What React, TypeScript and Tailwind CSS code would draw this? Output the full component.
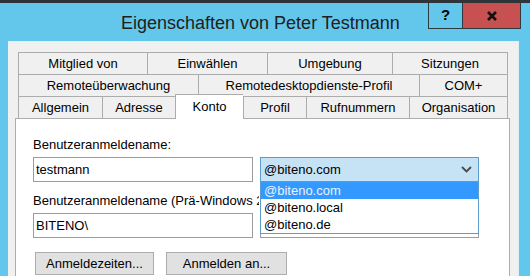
const ROW_1 = [
  { label: "Mitglied von", w: "w-[129px]" },
  { label: "Einwählen", w: "w-[120px]" },
  { label: "Umgebung", w: "w-[125px]" },
  { label: "Sitzungen", w: "w-[116px]" },
];
const ROW_2 = [
  { label: "Remoteüberwachung", w: "w-[180px]" },
  { label: "Remotedesktopdienste-Profil", w: "w-[221px]" },
  { label: "COM+", w: "w-[89px]" },
];
const ROW_3 = [
  { label: "Allgemein", w: "w-[84px]" },
  { label: "Adresse", w: "w-[73px]" },
  { label: "Konto", w: "w-[68px]", active: true },
  { label: "Profil", w: "w-[63px]" },
  { label: "Rufnummern", w: "w-[103px]" },
  { label: "Organisation", w: "w-[99px]" },
];
const DOMAINS = ["@biteno.com", "@biteno.local", "@biteno.de"];

type TabItem = { label: string; w: string; active?: boolean };

const TabRow = ({ tabs }: { tabs: TabItem[] }) => (
  <div className="flex h-[22px] ml-[10px]">
    {tabs.map((tab, i) => (
      <div
        key={tab.label}
        className={`${tab.w} flex items-center justify-center border-t border-l border-[#ACACAC] leading-[16px] ${
          i === tabs.length - 1 ? "border-r" : ""
        } ${
          tab.active
            ? "relative z-10 -mt-[2px] h-[25px] bg-white"
            : "h-[22px] bg-[#F0F0F0]"
        }`}
      >
        {tab.label}
      </div>
    ))}
  </div>
);

export default function App() {
  return (
    <div className="w-[530px] h-[276px] overflow-hidden bg-[#62C7EA] font-['Liberation_Sans',Arial,sans-serif] text-[13px] text-black">
      <div className="h-[3px] bg-[#2E3438]" />

      {/* title bar */}
      <div className="h-[38px] flex items-start">
        <div className="pl-[121px] mt-[10px] text-[18px] leading-[20px] text-[#1E1E1E]">
          Eigenschaften von Peter Testmann
        </div>
        <div className="ml-auto mr-[9px] flex">
          <div className="w-[35px] h-[26px] border border-t-0 border-[#2E3A40] flex items-center justify-center font-bold text-[15px]">
            ?
          </div>
          <div className="w-[58px] h-[26px] bg-[#C75050] border-b border-r border-[#2E3A40] flex items-center justify-center">
            <svg width="12" height="10" viewBox="0 0 12 10">
              <path d="M2 1 L10 9 M10 1 L2 9" stroke="#111" strokeWidth="2.6" />
            </svg>
          </div>
        </div>
      </div>

      {/* client area */}
      <div className="ml-[8px] w-[511px] h-[260px] bg-[#F0F0F0] border-t border-r border-[#DDEFF7] pt-[10px]">
        <TabRow tabs={ROW_1} />
        <TabRow tabs={ROW_2} />
        <TabRow tabs={ROW_3} />

        <div className="relative ml-[7px] w-[495px] h-[170px] border border-[#ADADAD] bg-white pl-[17px] pt-[18px]">
          <div className="leading-[16px]">Benutzeranmeldename:</div>
          <div className="mt-[4px] flex gap-[7px]">
            <div className="w-[220px] h-[25px] border border-[#9C9C9C] pl-[2px] flex items-center leading-[16px]">
              testmann
            </div>
            <div className="relative w-[219px]">
              <div className="h-[25px] border border-[#5C9DD0] bg-[#C6E3F5] flex items-center justify-between pl-[3px] pr-[6px] leading-[16px]">
                <span>@biteno.com</span>
                <svg width="11" height="7" viewBox="0 0 11 7">
                  <polyline points="1,1 5.5,5.5 10,1" fill="none" stroke="#4A4A4A" strokeWidth="1.8" />
                </svg>
              </div>
              <div className="absolute top-full left-0 w-full z-20 bg-white border-x border-b border-[#5C9DD0]">
                {DOMAINS.map((d, i) => (
                  <div
                    key={d}
                    className={`h-[17px] pl-[3px] leading-[17px] ${
                      i === 0 ? "bg-[#3399FF] text-[#EAF2FB]" : ""
                    }`}
                  >
                    {d}
                  </div>
                ))}
              </div>
            </div>
          </div>

          <div className="mt-[11px] w-[226px] overflow-hidden leading-[16px] whitespace-nowrap">
            Benutzeranmeldename (Prä-Windows 2000):
          </div>
          <div className="mt-[4px] flex gap-[7px]">
            <div className="w-[220px] h-[25px] border border-[#9C9C9C] pl-[2px] flex items-center leading-[16px]">
              BITENO\
            </div>
            <div className="w-[219px] h-[25px] border border-[#9C9C9C] bg-white" />
          </div>

          <div className="mt-[14px] flex">
            <button className="ml-[2px] w-[119px] h-[23px] bg-[#E1E1E1] border border-[#ADADAD] leading-[16px]">
              Anmeldezeiten...
            </button>
            <button className="ml-[12px] w-[121px] h-[23px] bg-[#E1E1E1] border border-[#ADADAD] leading-[16px]">
              Anmelden an...
            </button>
          </div>
        </div>
      </div>
    </div>
  );
}
